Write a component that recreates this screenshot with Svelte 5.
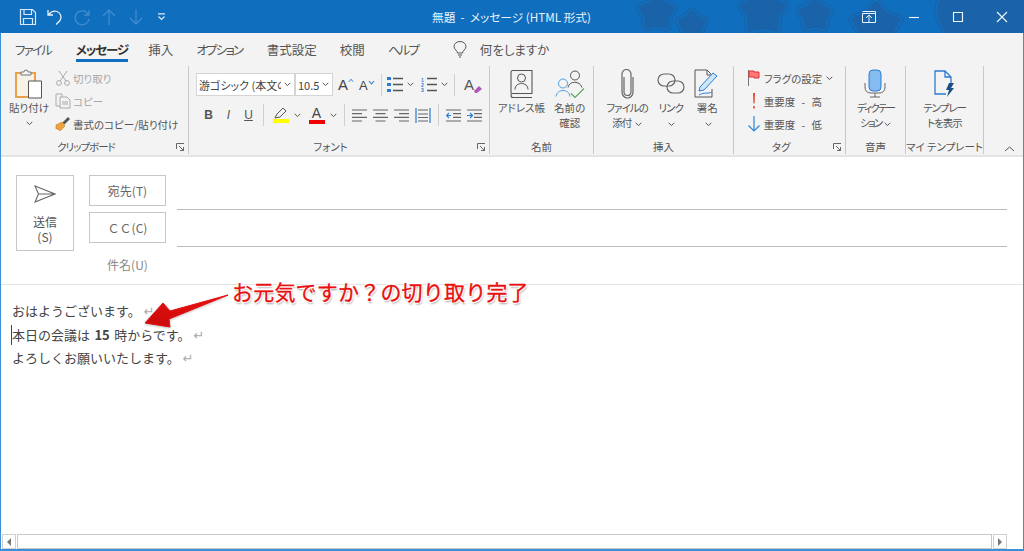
<script>
  const tabs = [
    { label: "ファイル", kana: true },
    { label: "メッセージ", active: true },
    { label: "挿入" },
    { label: "オプション", kana: true },
    { label: "書式設定" },
    { label: "校閲" },
    { label: "ヘルプ", kana: true }
  ];
  const stars = [
    [657, 13, 19], [692, 25, 14], [763, 12, 25], [815, 15, 17], [876, 27, 27]
  ];
  const blob = "M945 -4c-8 10-8 26 8 40h75V-4z";
  function starPath(cx, cy, r) {
    let d = "";
    for (let i = 0; i < 10; i++) {
      const a = -Math.PI / 2 + (i * Math.PI) / 5;
      const rr = i % 2 ? r * 0.58 : r * 0.86;
      d += (i ? "L" : "M") + (cx + rr * Math.cos(a)).toFixed(1) + " " + (cy + rr * Math.sin(a)).toFixed(1);
    }
    return d + "Z";
  }
</script>

{#snippet chev()}
  <svg class="chev" width="7" height="5" viewBox="0 0 7 5"><path d="M.7 .8 3.5 3.6 6.3 .8" fill="none" stroke="#555" stroke-width="1"/></svg>
{/snippet}

{#snippet launcher()}
  <svg class="launcher" width="9" height="9" viewBox="0 0 9 9"><path d="M.5 6V.5H8M3 3l4.500 4.500M7.500 4v3.500H4" fill="none" stroke="#666" stroke-width="1"/></svg>
{/snippet}

{#snippet ringed(d)}
  <path {d} fill="#1a63a8" stroke="#1a63a8" stroke-width="11" stroke-linejoin="round"/>
  <path {d} fill="#106ebe" stroke="#106ebe" stroke-width="8.500" stroke-linejoin="round"/>
  <path {d} fill="#1a63a8" stroke="#1a63a8" stroke-width="5" stroke-linejoin="round"/>
{/snippet}

<div class="window">
  <header class="titlebar">
    <svg class="stars" width="1024" height="33" viewBox="0 0 1024 33">
      {#each stars as s}
        {@render ringed(starPath(s[0], s[1], s[2]))}
      {/each}
      {@render ringed(blob)}
    </svg>
    <div class="qat">
      <svg width="18" height="18" viewBox="0 0 18 18" fill="none" stroke="#dbe9f6" stroke-width="1.200"><path d="M1.500 1.500h12l3 3v12h-15zM5 1.500v5h7.500v-5M4.500 16.500v-6h9v6"/></svg>
      <svg width="18" height="18" viewBox="0 0 18 18" fill="none" stroke="#eaf2fa" stroke-width="1.300"><path d="M2 2v5h5M2.500 6.800C5 3.500 8 2.500 11 3.500c4 1.500 5 6 3 9l-4 4"/></svg>
      <svg width="18" height="18" viewBox="0 0 18 18" fill="none" stroke="#3f8ccf" stroke-width="1.300"><path d="M16 2v5h-5M15.500 7A7 7 0 1 0 16 11"/></svg>
      <svg width="18" height="18" viewBox="0 0 18 18" fill="none" stroke="#3f8ccf" stroke-width="1.300"><path d="M9 17V2M3 8l6-6 6 6"/></svg>
      <svg width="18" height="18" viewBox="0 0 18 18" fill="none" stroke="#3f8ccf" stroke-width="1.300"><path d="M9 1v15M3 10l6 6 6-6"/></svg>
      <svg class="qat-more" width="9" height="8" viewBox="0 0 9 8" fill="none" stroke="#dbe9f6" stroke-width="1.200"><path d="M1 .8h7M1.500 3.500l3 3 3-3"/></svg>
    </div>
    <div class="title">無題&nbsp; - &nbsp;メッセージ (HTML 形式)</div>
    <div class="win-btns">
      <svg width="14" height="12" viewBox="0 0 14 12" fill="none" stroke="#e8f1fa"><path d="M.5 2.500h13v9H.5zM.5 .5h13v2M4 7l3-3 3 3M7 4v7"/></svg>
      <svg width="12" height="12" viewBox="0 0 12 12" stroke="#f4f8fc" stroke-width="1.100"><path d="M1 6.500h10"/></svg>
      <svg width="12" height="12" viewBox="0 0 12 12" fill="none" stroke="#f4f8fc" stroke-width="1.100"><path d="M1.500 1.500h9v9h-9z"/></svg>
      <svg width="12" height="12" viewBox="0 0 12 12" stroke="#f4f8fc" stroke-width="1.100"><path d="M1 1l10 10M11 1 1 11"/></svg>
    </div>
  </header>

  <div class="frame">
    <nav class="tabs">
      {#each tabs as t}
        <span class="tab" class:active={t.active} class:kana={t.kana}>{t.label}</span>
      {/each}
      <svg class="bulb" width="14" height="17" viewBox="0 0 14 17" fill="none" stroke="#555"><path d="M4.500 12c0-2.500-3.500-3.500-3.500-6.500a6 5 0 0 1 12 0c0 3-3.500 4-3.500 6.500zM5 14h4M6 16h2"/></svg>
      <span class="tell">何をしますか</span>
    </nav>

    <section class="ribbon">
      <div class="group clip">
        <div class="content">
          <div class="big paste">
            <svg width="28" height="30" viewBox="0 0 28 30" fill="none">
              <path d="M1 4h19v24H1z" stroke="#e8a04a" stroke-width="2" fill="#f7f2e8"/>
              <path d="M6 5V3h3a2 2 0 0 1 4 0h3v3H6z" stroke="#777" fill="#f3f3f3"/>
              <path d="M13.500 12h13v17h-13z" stroke="#555" fill="#fff"/>
            </svg>
            <span class="lbl">貼り付け</span>
            {@render chev()}
          </div>
          <div class="stack">
            <div class="small off">
              <svg width="16" height="16" viewBox="0 0 16 16" fill="none" stroke="#aaa"><path d="M4 1l7 10M12 1 5 11"/><circle cx="4" cy="13" r="2.400"/><circle cx="12" cy="13" r="2.400"/></svg>
              切り取り
            </div>
            <div class="small off">
              <svg width="16" height="16" viewBox="0 0 16 16" fill="none" stroke="#aaa"><path d="M1 1h6v12H1z"/><path d="M5 4h7l3 3v8H5z" fill="#f3f3f3"/><path d="M7 9h6M7 11h6"/></svg>
              コピー
            </div>
            <div class="small">
              <svg width="16" height="16" viewBox="0 0 16 16"><path d="M1 9l6-3 3 4-5 5-1-2-1 1-1-2-1 1z" fill="#eda33f" stroke="#c97c18" stroke-width=".6"/><path d="M7.500 6.500 13 1l2 2-5.500 5.500z" fill="#555"/></svg>
              書式のコピー/貼り付け
            </div>
          </div>
        </div>
        <div class="glabel launch">クリップボード{@render launcher()}</div>
      </div>

      <div class="group font">
        <div class="content rows">
          <div class="frow">
            <div class="select name"><span>游ゴシック (本文の</span>{@render chev()}</div>
            <div class="select size"><span>10.5</span>{@render chev()}</div>
            <span class="ficon grow">A<svg width="7" height="5" viewBox="0 0 7 5"><path d="M1 4l2.500-3L6 4" fill="none" stroke="#2b7cd3" stroke-width="1.100"/></svg></span>
            <span class="ficon shrink">A<svg width="7" height="5" viewBox="0 0 7 5"><path d="M1 1l2.500 3L6 1" fill="none" stroke="#2b7cd3" stroke-width="1.100"/></svg></span>
            <i class="vsep"></i>
            <svg class="bullets" width="16" height="15" viewBox="0 0 16 15"><path d="M0 0h4v3H0zM0 6h4v3H0zM0 12h4v3H0z" fill="#2b7cd3"/><path d="M6 1.500h10M6 7.500h10M6 13.500h10" stroke="#555" stroke-width="1.300"/></svg>
            <span class="chev-wrap">{@render chev()}</span>
            <svg class="num" width="16" height="15" viewBox="0 0 16 15"><text x="0" y="5" class="mini">1</text><text x="0" y="10" class="mini">2</text><text x="0" y="15" class="mini">3</text><path d="M6 1.500h10M6 7.500h10M6 13.500h10" stroke="#555" stroke-width="1.300"/></svg>
            <span class="chev-wrap">{@render chev()}</span>
            <i class="vsep"></i>
            <span class="clear">A<svg width="10" height="9" viewBox="0 0 10 9"><path d="M1 6l5-5 3 3-5 4H2z" fill="#b258bd"/></svg></span>
          </div>
          <div class="frow second">
            <b class="fb">B</b><em class="fb">I</em><u class="fb under">U</u>
            <i class="vsep"></i>
            <span class="colr">
              <svg width="14" height="12" viewBox="0 0 14 12" fill="none" stroke="#555"><path d="M1 11l2-4 6-6 3 3-6 6z"/></svg>
              <i class="bar yellow"></i>
            </span>
            <span class="chev-wrap">{@render chev()}</span>
            <span class="colr a"><span class="ca">A</span><i class="bar red"></i></span>
            <span class="chev-wrap">{@render chev()}</span>
            <i class="vsep"></i>
            <svg width="15" height="13" viewBox="0 0 15 13" stroke="#666" stroke-width="1.200"><path d="M0 1h15M0 4.700h10M0 8.300h15M0 12h10"/></svg>
            <svg width="15" height="13" viewBox="0 0 15 13" stroke="#666" stroke-width="1.200"><path d="M0 1h15M2.500 4.700h10M0 8.300h15M2.500 12h10"/></svg>
            <svg width="15" height="13" viewBox="0 0 15 13" stroke="#666" stroke-width="1.200"><path d="M0 1h15M5 4.700h10M0 8.300h15M5 12h10"/></svg>
            <svg width="16" height="15" viewBox="0 0 16 15" fill="none" stroke-width="1.200"><path d="M1 0v15M15 0v15" stroke="#2b7cd3"/><path d="M3 2h10M3 6h10M3 9.500h10M3 13h10" stroke="#666"/></svg>
            <i class="vsep"></i>
            <svg width="15" height="13" viewBox="0 0 15 13" fill="none" stroke-width="1.200"><path d="M0 1h15M7 4.700h8M7 8.300h8M0 12h15" stroke="#666"/><path d="M5 6.500H.5M3 4 .5 6.500 3 9" stroke="#2b7cd3"/></svg>
            <svg width="15" height="13" viewBox="0 0 15 13" fill="none" stroke-width="1.200"><path d="M0 1h15M7 4.700h8M7 8.300h8M0 12h15" stroke="#666"/><path d="M0 6.500h5M3 4l2.500 2.500L3 9" stroke="#2b7cd3"/></svg>
          </div>
        </div>
        <div class="glabel launch">フォント{@render launcher()}</div>
      </div>

      <div class="group names">
        <div class="content">
          <div class="big">
            <svg width="24" height="29" viewBox="0 0 24 29" fill="none" stroke="#555"><path d="M2 24V3q0-2 2-2h19v23H4q-2 0-2 2t2 2h19" stroke-width="1.100"/><circle cx="12.500" cy="8.500" r="4"/><path d="M6 20c0-8 13-8 13 0"/></svg>
            <span class="lbl">アドレス帳</span>
          </div>
          <div class="big wide">
            <svg width="30" height="29" viewBox="0 0 30 29" fill="none"><circle cx="20" cy="6" r="4.500" stroke="#555"/><path d="M13 18c1-7 12-7 14 0" stroke="#555"/><circle cx="8" cy="14" r="4.500" stroke="#4aa0e6"/><path d="M1 27c1-8 13-8 14 0" stroke="#4aa0e6"/><path d="M16 24l4 4 9-9" stroke="#5aab5a" stroke-width="1.200"/></svg>
            <span class="lbl">名前の<br/>確認</span>
          </div>
        </div>
        <div class="glabel">名前</div>
      </div>

      <div class="group insert">
        <div class="content">
          <div class="big">
            <svg width="14" height="30" viewBox="0 0 14 30" fill="none" stroke="#666" stroke-width="1.200"><path d="M4 8v15a3.500 3.500 0 0 0 7 0V5a4 4 0 0 0-9 0v18a5.500 6 0 0 0 11 0V8"/></svg>
            <span class="lbl tight">ファイルの<br/>添付 {@render chev()}</span>
          </div>
          <div class="big link">
            <svg width="28" height="30" viewBox="0 0 28 30" fill="none" stroke="#666" stroke-width="1.200"><rect x="1" y="5" width="17" height="12" rx="6"/><rect x="10" y="12" width="17" height="12" rx="6"/></svg>
            <span class="lbl tight">リンク<br/>{@render chev()}</span>
          </div>
          <div class="big sign">
            <svg width="27" height="30" viewBox="0 0 27 30" fill="none"><path d="M18 28H1V1h12l5 5v3M13 1v5h5M18 20v8" stroke="#555"/><path d="M5 22l1-4L19 4l4 3L10 21z" stroke="#2b7cd3" fill="#cfe6f8"/><path d="M5 26c5-3 9-1 13-3" stroke="#2b7cd3"/></svg>
            <span class="lbl">署名<br/>{@render chev()}</span>
          </div>
        </div>
        <div class="glabel">挿入</div>
      </div>

      <div class="group tags">
        <div class="content">
          <div class="stack">
            <div class="small">
              <svg width="14" height="16" viewBox="0 0 14 16"><path d="M1.500 0v16" stroke="#777"/><path d="M2 1h5v1h5v6H7V7H2z" fill="#f77" stroke="#d33"/></svg>
              フラグの設定 {@render chev()}
            </div>
            <div class="small spaced">
              <svg width="14" height="16" viewBox="0 0 14 16"><path d="M6 0h2l-.4 10.500H6.400zM6.200 13h1.600v2.500H6.200z" fill="#e43"/></svg>
              重要度 - 高
            </div>
            <div class="small spaced">
              <svg width="14" height="16" viewBox="0 0 14 16" fill="none" stroke="#2b88d8" stroke-width="1.200"><path d="M7 0v15M1.500 9.500 7 15l5.500-5.500"/></svg>
              重要度 - 低
            </div>
          </div>
        </div>
        <div class="glabel launch">タグ{@render launcher()}</div>
      </div>

      <div class="group voice">
        <div class="content">
          <div class="big">
            <svg width="22" height="30" viewBox="0 0 22 30" fill="none"><rect x="5" y="1" width="12" height="21" rx="4" fill="#84bbf0" stroke="#2b7cd3"/><path d="M1 14v4q0 6 6 6h8q6 0 6-6v-4M11 24v4M6 28h10" stroke="#666"/></svg>
            <span class="lbl tighter">ディクテー<br/>ション {@render chev()}</span>
          </div>
        </div>
        <div class="glabel">音声</div>
      </div>

      <div class="group tmpl">
        <div class="content">
          <div class="big">
            <svg width="22" height="30" viewBox="0 0 22 30" fill="none"><path d="M13 25H2V2h10l6 6v6M12 2v6h6" stroke="#2b7cd3" stroke-width="1.300"/><path d="M16 14h5l-3 5h3l-7 9 2-7h-3z" fill="#1c4f82"/></svg>
            <span class="lbl tight">テンプレー<br/>トを表示</span>
          </div>
        </div>
        <div class="glabel">マイ テンプレート</div>
      </div>

      <svg class="collapse" width="11" height="6" viewBox="0 0 11 6"><path d="M1 5l4.500-4L10 5" fill="none" stroke="#555"/></svg>
    </section>

    <div class="ribbon-shadow"></div>

    <section class="compose">
      <button class="send">
        <svg width="22" height="18" viewBox="0 0 22 18" fill="none" stroke="#666" stroke-width="1.100"><path d="M1 1l20 8-20 8 3.500-8zM4.500 9H21"/></svg>
        <span>送信<br/>(S)</span>
      </button>
      <div class="fields">
        <div class="field">
          <button class="addr">宛先(T)</button>
          <div class="line"></div>
        </div>
        <div class="field">
          <button class="addr">ＣＣ(C)</button>
          <div class="line"></div>
        </div>
        <div class="subject">件名(U)</div>
      </div>
    </section>

    <section class="body">
      <p>おはようございます。<span class="ret">↵</span></p>
      <p class="caret-line"><i class="caret"></i>本日の会議は <b>15</b> 時からです。<span class="ret">↵</span></p>
      <p>よろしくお願いいたします。<span class="ret">↵</span></p>
    </section>

    <div class="hscroll">
      <span class="sbtn"><svg width="4" height="8" viewBox="0 0 4 8"><path d="M4 0v8L0 4z" fill="#777"/></svg></span>
      <span class="strack"></span>
      <span class="sbtn"><svg width="4" height="8" viewBox="0 0 4 8"><path d="M0 0v8l4-4z" fill="#777"/></svg></span>
    </div>
  </div>

  <div class="note">
    <svg class="arrow" width="90" height="48" viewBox="0 0 90 48">
      <defs>
        <linearGradient id="ag" x1="0" y1="1" x2="1" y2="0"><stop offset="0" stop-color="#c80a0a"/><stop offset="1" stop-color="#f01010"/></linearGradient>
      </defs>
      <path d="M1 41 19 21l7 8 58-16-59 24 1 8z" fill="url(#ag)" stroke="#e01010" stroke-width="1" stroke-linejoin="round"/>
    </svg>
    <span class="note-text">お元気ですか？の切り取り完了</span>
  </div>
</div>

<style>
  :global(body) {
    margin: 0;
    background: #fff;
  }

  .window {
    position: relative;
    width: 1024px;
    height: 551px;
    overflow: hidden;
    display: flex;
    flex-direction: column;
    font-family: "Noto Sans CJK JP", "Liberation Sans", sans-serif;
    color: #444;
  }

  .titlebar {
    position: relative;
    height: 33px;
    flex: none;
    background: #106ebe;
    display: grid;
    grid-template-columns: 432px 1fr auto;
    align-items: center;
    overflow: hidden;
  }
  .stars {
    position: absolute;
    inset: 0;
  }
  .qat {
    position: relative;
    display: flex;
    align-items: center;
    gap: 9px;
    padding-left: 19px;
  }
  .qat-more {
    margin-left: 3px;
  }
  .title {
    position: relative;
    color: #e8f1fa;
    font-size: 11.700px;
    white-space: nowrap;
    font-feature-settings: "palt";
  }
  .win-btns {
    position: relative;
    display: flex;
    align-items: center;
    gap: 32px;
    padding-right: 16px;
  }

  .frame {
    flex: 1;
    min-height: 0;
    display: flex;
    flex-direction: column;
    border: 1px solid #3b8ed8;
    border-top: 0;
    border-bottom-width: 2px;
    background: #fff;
  }

  .tabs {
    height: 32px;
    flex: none;
    background: #f3f3f3;
    display: flex;
    align-items: center;
    font-size: 12.500px;
    padding-left: 14px;
    color: #555;
    font-feature-settings: "palt";
  }
  .tab {
    margin-right: 23px;
    position: relative;
    white-space: nowrap;
  }
  .tab.kana {
    letter-spacing: -1.800px;
    margin-right: 24.500px;
  }
  .tab.active {
    font-weight: 700;
    color: #333;
    letter-spacing: -1px;
    margin-right: 20px;
  }
  .tab.active::after {
    content: "";
    position: absolute;
    left: 0;
    right: 0;
    bottom: -3px;
    height: 3px;
    background: #106ebe;
  }
  .bulb {
    margin-left: 10px;
  }
  .tell {
    margin-left: 13px;
  }

  .ribbon {
    position: relative;
    height: 90px;
    flex: none;
    background: #f3f3f3;
    display: flex;
    font-size: 10.500px;
    color: #555;
    font-feature-settings: "palt";
  }
  .group {
    position: relative;
    box-sizing: border-box;
    display: flex;
    flex-direction: column;
    border-right: 1px solid #c8c8c8;
    height: 88px;
    margin-top: 1px;
  }
  .clip { width: 188px; }
  .font { width: 301px; }
  .names { width: 104px; }
  .insert { width: 140px; }
  .tags { width: 112px; }
  .voice { width: 60px; }
  .tmpl { width: 78px; }

  .content {
    flex: 1;
    display: flex;
    min-height: 0;
    justify-content: center;
    gap: 9px;
  }
  .clip .content {
    justify-content: flex-start;
    gap: 0;
  }
  .glabel {
    position: relative;
    height: 15px;
    font-size: 10.500px;
    text-align: center;
    line-height: 16px;
    white-space: nowrap;
  }
  .glabel.launch {
    padding-right: 17px;
  }
  .clip .glabel {
    letter-spacing: -1px;
  }
  .launcher {
    position: absolute;
    right: 3px;
    top: 4px;
  }

  .big {
    display: flex;
    flex-direction: column;
    align-items: center;
    text-align: center;
    padding-top: 3px;
    line-height: 15px;
    white-space: nowrap;
  }
  .big svg:not(.chev) {
    height: 30px;
    margin-bottom: 1px;
  }
  .lbl.tight {
    letter-spacing: -1px;
  }
  .lbl.tighter {
    letter-spacing: -1.800px;
  }
  .lbl .chev {
    margin-left: 2px;
  }
  .paste {
    width: 50px;
    margin-left: 3px;
    margin-right: 1px;
  }
  .paste .chev {
    margin-top: 6px;
  }
  .stack {
    display: flex;
    flex-direction: column;
    gap: 5px;
    padding-top: 3px;
  }
  .small {
    display: flex;
    align-items: center;
    gap: 2px;
    height: 18px;
    white-space: nowrap;
  }
  .small svg:not(.chev) {
    width: 16px;
  }
  .small .chev {
    margin-left: 2px;
  }
  .off {
    color: #a8a8a8;
  }
  .spaced {
    word-spacing: 4px;
  }

  .rows {
    flex-direction: column;
    justify-content: flex-start;
    gap: 0;
    padding: 7px 0 0 7px;
  }
  .frow {
    display: flex;
    align-items: center;
    height: 23px;
    gap: 5px;
  }
  .second {
    margin-top: 7px;
    height: 24px;
    padding-left: 6px;
    gap: 6px;
  }
  .select {
    box-sizing: border-box;
    height: 23px;
    background: #fff;
    border: 1px solid #d4d4d4;
    display: flex;
    align-items: center;
    overflow: hidden;
    font-size: 11px;
    color: #444;
    padding-left: 2px;
  }
  .select span {
    flex: 1;
    overflow: hidden;
    white-space: nowrap;
  }
  .select .chev {
    flex: none;
    margin: 0 3px;
  }
  .name { width: 99px; }
  .size { width: 38px; margin-left: -5px; }
  .ficon {
    font-size: 15px;
    display: flex;
    width: 16px;
    line-height: 1;
    font-family: "Liberation Sans", sans-serif;
    color: #444;
  }
  .ficon svg { margin-top: 1px; }
  .shrink { font-size: 13px; padding-top: 2px; }
  .vsep {
    width: 1px;
    height: 22px;
    background: #d0d0d0;
    margin: 0 1px;
  }
  .bullets {
    margin-left: -1px;
  }
  .chev-wrap {
    display: inline-flex;
    margin-left: -1px;
  }
  .num {
    margin-left: 2px;
  }
  .mini {
    font: 700 5px "Liberation Sans", sans-serif;
    fill: #2b7cd3;
  }
  .clear {
    position: relative;
    font: 15px "Liberation Sans", sans-serif;
    width: 18px;
    margin-left: 3px;
  }
  .clear svg {
    position: absolute;
    left: 9px;
    top: 9px;
  }
  .fb {
    width: 13px;
    text-align: center;
    font: 12px "Liberation Sans", sans-serif;
    color: #555;
    margin-right: 1px;
  }
  b.fb { font-weight: 700; }
  em.fb { font-style: italic; }
  .colr {
    display: flex;
    flex-direction: column;
    align-items: center;
    width: 17px;
    margin-left: 1px;
  }
  .ca {
    font: 14px/13px "Liberation Sans", sans-serif;
    color: #444;
  }
  .bar {
    display: block;
    width: 16px;
    height: 4px;
  }
  .yellow { background: #ffff00; }
  .red { background: #f00000; }

  .collapse {
    position: absolute;
    right: 8px;
    bottom: 3px;
  }
  .ribbon-shadow {
    height: 2px;
    flex: none;
    background: #e4e4e4;
  }

  .compose {
    height: 128px;
    flex: none;
    box-sizing: border-box;
    border-bottom: 1px solid #e3e3e3;
    padding: 18px 16px 0 15px;
    display: flex;
    gap: 15px;
  }
  .send {
    box-sizing: border-box;
    width: 58px;
    height: 76px;
    background: #fff;
    border: 1px solid #c6c6c6;
    display: flex;
    flex-direction: column;
    align-items: center;
    padding: 9px 0 0;
    font: 12px/15px "Noto Sans CJK JP", sans-serif;
    color: #555;
  }
  .send span {
    margin-top: 11px;
  }
  .fields {
    flex: 1;
    display: flex;
    flex-direction: column;
    gap: 6px;
  }
  .field {
    display: flex;
    gap: 11px;
    height: 31px;
  }
  .addr {
    box-sizing: border-box;
    width: 77px;
    height: 31px;
    background: #fff;
    border: 1px solid #c6c6c6;
    padding: 0;
    font: 12px "Noto Sans CJK JP", sans-serif;
    color: #666;
  }
  .line {
    flex: 1;
    height: 35px;
    box-sizing: border-box;
    border-bottom: 1px solid #bdbdbd;
  }
  .subject {
    width: 77px;
    text-align: center;
    font-size: 12px;
    color: #888;
    margin-top: 7px;
  }

  .body {
    flex: 1;
    min-height: 0;
    padding-top: 14px;
    font-size: 13px;
    color: #444;
  }
  .body p {
    margin: 0;
    height: 23.500px;
    line-height: 23.500px;
    padding-left: 11px;
    position: relative;
    word-spacing: 1.500px;
  }
  .caret {
    position: absolute;
    left: 10px;
    top: 2px;
    width: 1px;
    height: 20px;
    background: #444;
  }
  .ret {
    color: #aaa;
    font: 13px "DejaVu Sans", sans-serif;
    margin-left: 3px;
  }

  .hscroll {
    flex: none;
    height: 15px;
    margin: 0 16px 0 1px;
    display: flex;
    gap: 1px;
  }
  .sbtn {
    width: 14px;
    box-sizing: border-box;
    border: 1px solid #d0d0d0;
    display: flex;
    align-items: center;
    justify-content: center;
  }
  .strack {
    flex: 1;
    border: 1px solid #c8c8c8;
  }

  .note {
    position: absolute;
    left: 144px;
    top: 278px;
    display: flex;
  }
  .arrow {
    margin-top: 4px;
    filter: drop-shadow(0 1px 1px rgba(0, 0, 0, .25));
  }
  .note-text {
    position: absolute;
    left: 88px;
    top: 0;
    white-space: nowrap;
    font-size: 21px;
    letter-spacing: .2px;
    line-height: 26px;
    color: #e81010;
    -webkit-text-stroke: .3px #e81010;
    text-shadow: 1px 1px 0 #fff, -1px -1px 0 #fff, 1px -1px 0 #fff, -1px 1px 0 #fff, 1px 2px 2px #999;
  }
</style>
